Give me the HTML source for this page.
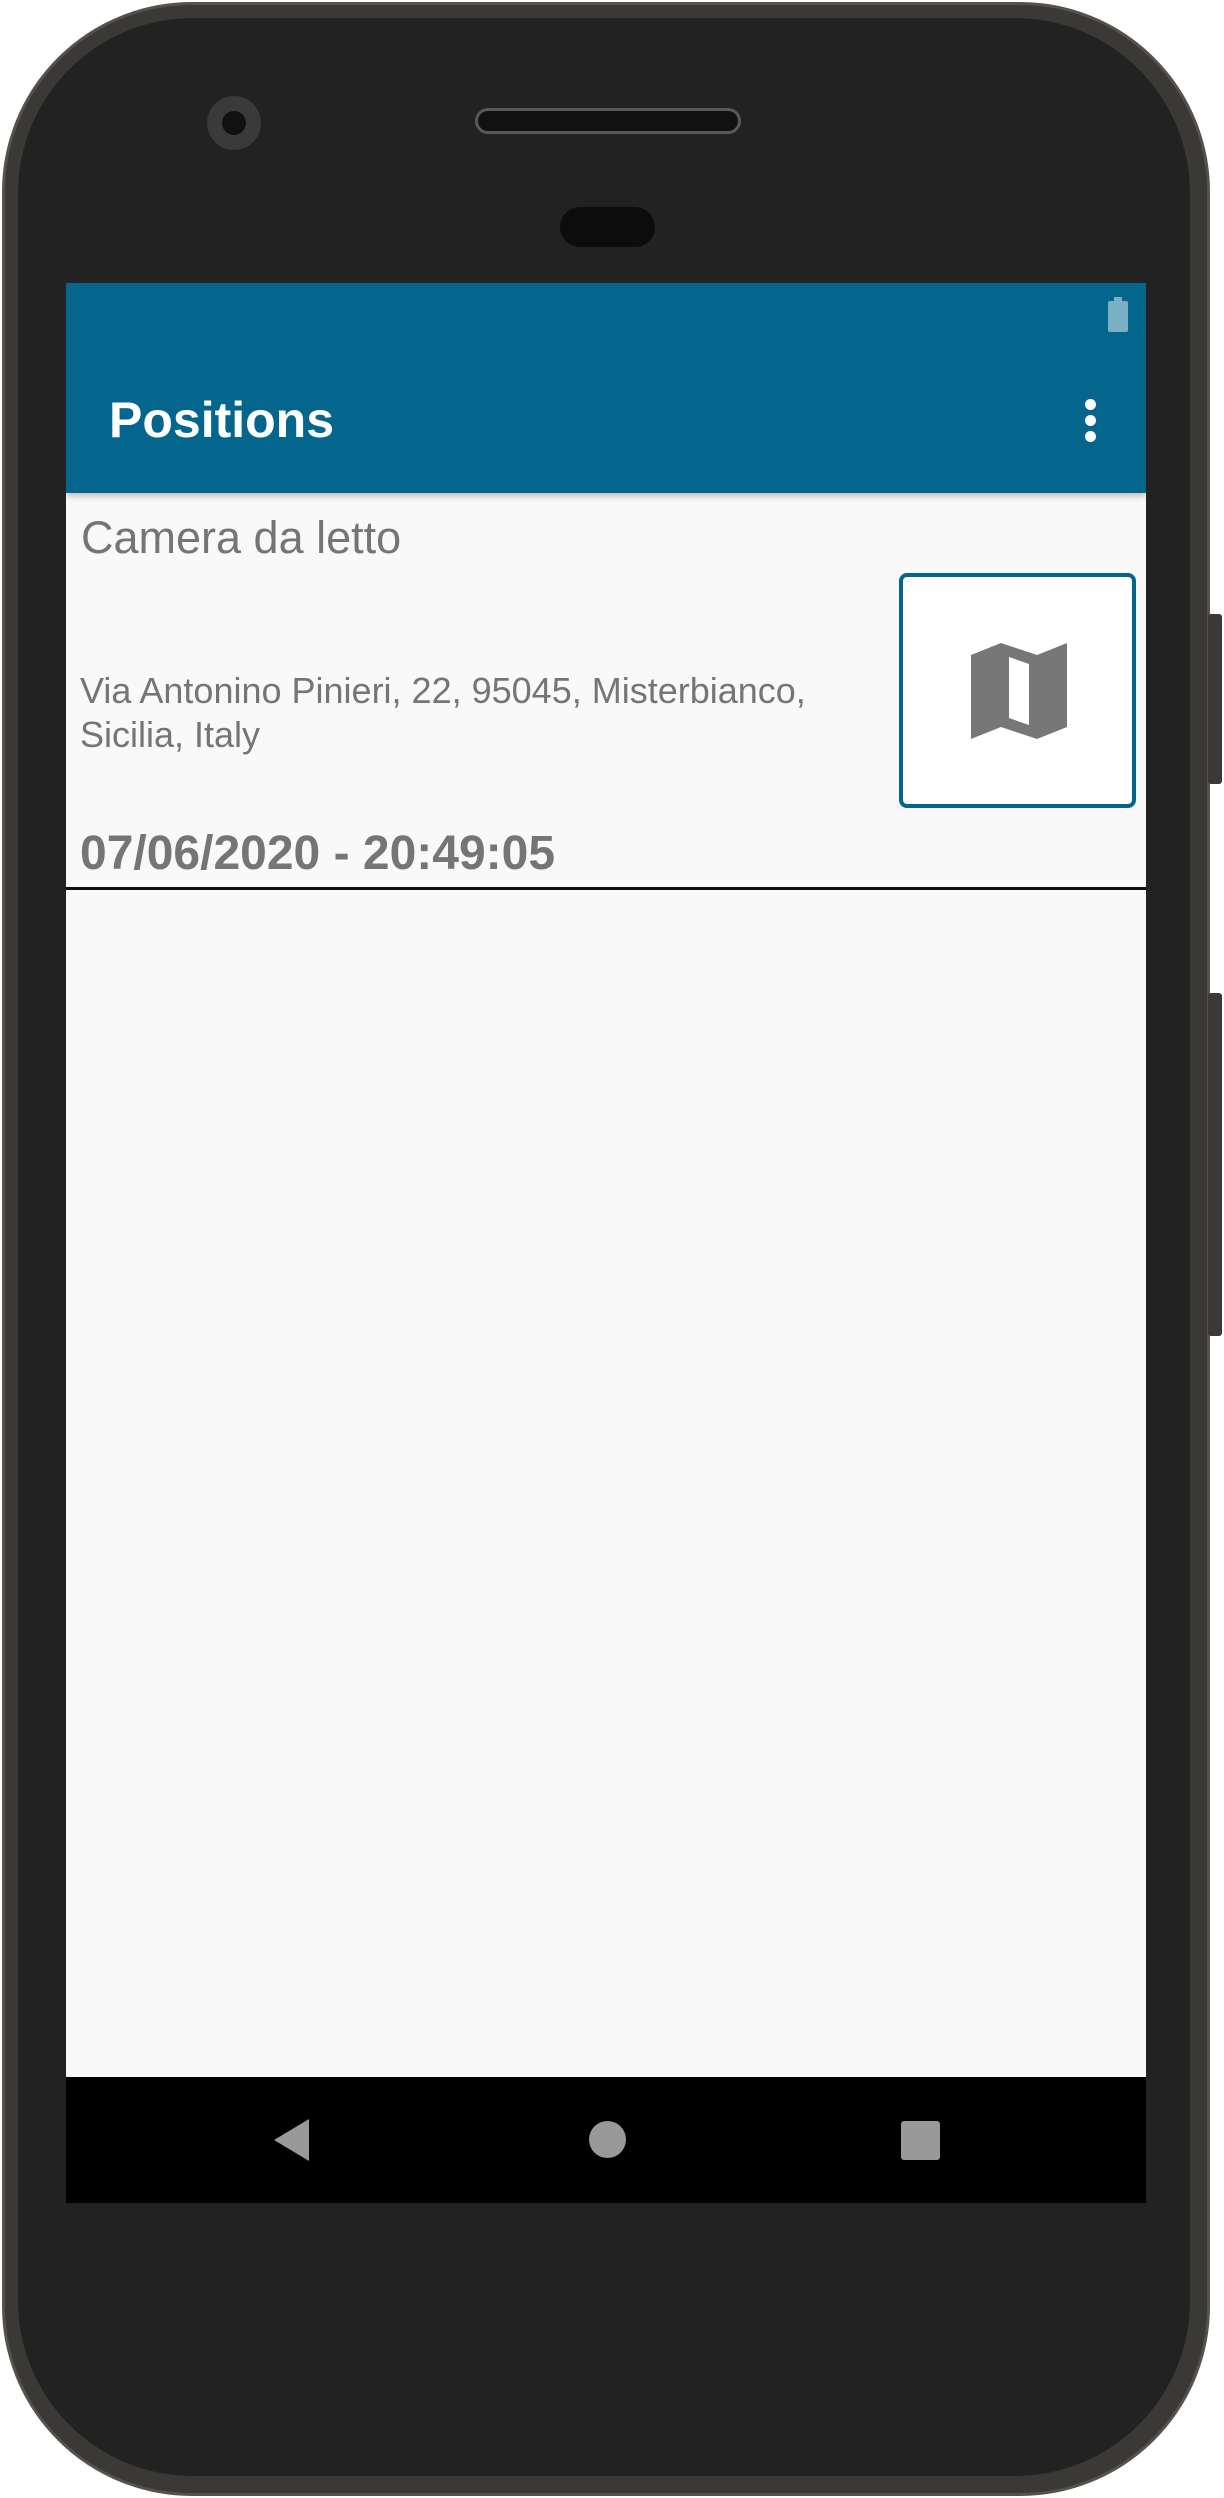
<!DOCTYPE html>
<html><head><meta charset="utf-8"><style>
*{margin:0;padding:0;box-sizing:border-box}
body{width:1224px;height:2498px;background:#fff;position:relative;overflow:hidden;font-family:"Liberation Sans",Roboto,sans-serif}
.phone{position:absolute;left:2px;top:2px;width:1208px;height:2494px;border-radius:190px;background:#3b3936;border:3px solid #55524e}
.inner{position:absolute;left:18px;top:18px;width:1172px;height:2458px;border-radius:175px;background:#232222}
.btn{position:absolute;right:2px;width:14px;background:#3b3936;border-radius:3px}
.screen{position:absolute;left:66px;top:283px;width:1080px;height:1920px;background:#f9f9f9;overflow:hidden}
.bar{position:absolute;left:0;top:0;width:100%;height:210px;background:#05668d;box-shadow:0 3px 6px rgba(0,0,0,.25)}
.title{position:absolute;left:43px;top:108px;font-size:50px;font-weight:bold;color:#fff}
.nav{position:absolute;left:0;bottom:0;width:100%;height:126px;background:#000}
.t{position:absolute;color:#757575;white-space:nowrap}
</style></head><body>
<div class="phone"></div>
<div class="inner"></div>
<div class="btn" style="top:614px;height:170px"></div>
<div class="btn" style="top:993px;height:343px"></div>
<div style="position:absolute;left:207px;top:96px;width:54px;height:54px;border-radius:50%;background:#3a3a3a"></div>
<div style="position:absolute;left:222px;top:111px;width:24px;height:24px;border-radius:50%;background:#111"></div>
<div style="position:absolute;left:475px;top:108px;width:266px;height:26px;border-radius:13px;background:#111;border:3px solid #5a5856"></div>
<div style="position:absolute;left:560px;top:207px;width:95px;height:40px;border-radius:20px;background:#0c0c0c"></div>
<div class="screen">
 <div class="bar">
  <div style="position:absolute;left:1042px;top:18px;width:20px;height:31px;background:#7ab0c4;border-radius:2px"></div>
  <div style="position:absolute;left:1048px;top:14px;width:8px;height:5px;background:#7ab0c4"></div>
  <div style="position:absolute;left:1019px;top:116px;width:11px;height:11px;border-radius:50%;background:#fff;box-shadow:0 16px 0 #fff,0 32px 0 #fff"></div>
  <div class="title">Positions</div>
 </div>
 <div class="t" style="left:15px;top:229px;font-size:45px">Camera da letto</div>
 <div class="t" style="left:14px;top:386px;font-size:36px;line-height:44px">Via Antonino Pinieri, 22, 95045, Misterbianco,<br>Sicilia, Italy</div>
 <div class="t" style="left:14px;top:543px;font-size:48px;font-weight:bold">07/06/2020 - 20:49:05</div>
 <div style="position:absolute;left:0;top:604px;width:100%;height:3px;background:#111"></div>
 <div style="position:absolute;left:833px;top:290px;width:237px;height:235px;border:4px solid #05668d;border-radius:8px;background:#fff">
  <svg style="position:absolute;left:68px;top:66px" width="96" height="96" viewBox="0 0 96 96"><path fill="#777" fill-rule="evenodd" d="M0 12 L30 0 L66 12 L96 0 L96 84 L66 96 L30 84 L0 96 Z M38 14 L58 21 L58 82 L38 75 Z"/></svg>
 </div>
 <div class="nav">
  <svg style="position:absolute;left:208px;top:42px" width="36" height="42"><path d="M35 0 L35 42 L0 21Z" fill="#999"/></svg>
  <div style="position:absolute;left:523px;top:44px;width:37px;height:37px;border-radius:50%;background:#999"></div>
  <div style="position:absolute;left:835px;top:44px;width:39px;height:39px;border-radius:3px;background:#999"></div>
 </div>
</div>
</body></html>
